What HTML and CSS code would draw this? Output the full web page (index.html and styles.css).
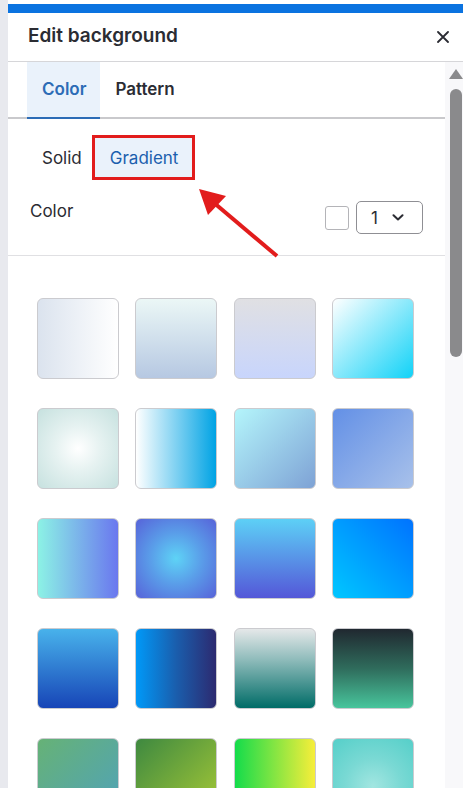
FILE: index.html
```html
<!DOCTYPE html>
<html lang="en">
<head>
<meta charset="utf-8">
<title>Edit background</title>
<link rel="stylesheet" href="styles.css">
</head>
<body>
<div class="app">
  <div class="side"></div>
  <div class="panel">
    <div class="topbar"></div>
    <div class="header">
      <h1 class="title">Edit background</h1>
      <button class="close" aria-label="Close">
        <svg width="12" height="12" viewBox="0 0 12 12"><path d="M1 1 L11 11 M11 1 L1 11" stroke="#2b2c33" stroke-width="1.8" stroke-linecap="round" fill="none"/></svg>
      </button>
    </div>
    <div class="body">
      <div class="content">
        <div class="tabs">
          <div class="tab active">Color</div>
          <div class="tab">Pattern</div>
        </div>
        <div class="modes">
          <button class="mode">Solid</button>
          <button class="mode selected">Gradient</button>
        </div>
        <div class="color-row">
          <span class="label">Color</span>
          <div class="controls">
            <span class="chip"></span>
            <div class="select">
              <span class="select-value">1</span>
              <svg width="12" height="7" viewBox="0 0 12 7"><path d="M1.5 1.2 L6 5.5 L10.5 1.2" stroke="#2b2c33" stroke-width="2" fill="none" stroke-linecap="round" stroke-linejoin="round"/></svg>
            </div>
          </div>
        </div>
        <div class="divider"></div>
        <div class="grid">
          <div class="sw g1"></div><div class="sw g2"></div><div class="sw g3"></div><div class="sw g4"></div>
          <div class="sw g5"></div><div class="sw g6"></div><div class="sw g7"></div><div class="sw g8"></div>
          <div class="sw g9"></div><div class="sw g10"></div><div class="sw g11"></div><div class="sw g12"></div>
          <div class="sw g13"></div><div class="sw g14"></div><div class="sw g15"></div><div class="sw g16"></div>
          <div class="sw g17"></div><div class="sw g18"></div><div class="sw g19"></div><div class="sw g20"></div>
        </div>
      </div>
      <div class="scrollbar">
        <div class="sb-arrow"></div>
        <div class="sb-thumb"></div>
      </div>
    </div>
  </div>
  <svg class="annot" width="463" height="788" viewBox="0 0 463 788">
    <line x1="277" y1="256" x2="213" y2="202" stroke="#e21c1c" stroke-width="4"/>
    <polygon points="199,189 208,215 226,196" fill="#e21c1c"/>
  </svg>
</div>
</body>
</html>
```

FILE: styles.css
```css
* { box-sizing: border-box; }
html, body { margin: 0; padding: 0; }
body {
  font-family: Inter, "Noto Sans", "Liberation Sans", sans-serif;
  background: #e8e9ee;
  width: 463px;
  height: 788px;
  overflow: hidden;
}
.app {
  position: relative;
  display: flex;
  width: 463px;
  height: 788px;
}
.side {
  width: 8px;
  flex: none;
  background: #e8e9ee;
}
.panel {
  flex: 1;
  display: flex;
  flex-direction: column;
  background: #fff;
  padding-top: 4px;
  overflow: hidden;
}
.topbar {
  height: 9px;
  background: #0b73e0;
  flex: none;
}
.header {
  height: 49px;
  flex: none;
  display: flex;
  align-items: center;
  justify-content: space-between;
  padding: 0 14px 3px 20px;
  border-bottom: 1px solid #d6d6d9;
}
.title {
  margin: 0;
  font-size: 19px;
  font-weight: 600;
  color: #2b2c33;
  letter-spacing: 0;
}
.close {
  border: 0;
  background: none;
  padding: 0;
  width: 12px;
  height: 12px;
  display: flex;
  margin-top: 3px;
}
.body {
  flex: 1;
  display: flex;
  min-height: 0;
}
.content {
  width: 437px;
  flex: none;
  overflow: hidden;
}
.tabs {
  display: flex;
  height: 57px;
  padding-left: 19px;
  border-bottom: 2px solid #c9c9cc;
}
.tab {
  display: flex;
  align-items: center;
  padding: 0 15px 2px;
  font-size: 17px;
  font-weight: 600;
  color: #2b2c33;
  margin-bottom: -2px;
  border-bottom: 2px solid transparent;
}
.tab.active {
  background: #eaf2fb;
  color: #2c6cb6;
  border-bottom-color: #2c6cb6;
  padding: 0 14px 2px 15px;
}
.modes {
  display: flex;
  margin-top: 19px;
  padding-left: 19px;
}
.mode {
  font-family: inherit;
  font-size: 17px;
  height: 39px;
  padding: 0 13px 0 15px;
  border: 0;
  background: none;
  color: #2b2c33;
}
.mode.selected {
  background: #eaf2fb;
  color: #1b5fae;
  outline: 3px solid #e21c1c;
  padding: 0 14px 0 15px;
}
.color-row {
  display: flex;
  justify-content: space-between;
  align-items: flex-start;
  margin-top: 24px;
  padding: 0 22px 0 22px;
}
.label {
  font-size: 17px;
  color: #2b2c33;
  line-height: 20px;
}
.controls {
  display: flex;
  align-items: center;
  gap: 7px;
}
.chip {
  width: 24px;
  height: 24px;
  border: 1px solid #b4b4b8;
  border-radius: 3px;
  background: #fff;
}
.select {
  width: 67px;
  height: 33px;
  border: 1px solid #8f8f94;
  border-radius: 5px;
  display: flex;
  align-items: center;
  padding-left: 14px;
  gap: 14px;
}
.select-value {
  font-size: 17px;
  color: #2b2c33;
}
.divider {
  margin-top: 21px;
  height: 1px;
  background: #e0e0e3;
}
.grid {
  margin-top: 42px;
  margin-left: 29px;
  width: 377px;
  display: grid;
  grid-template-columns: repeat(4, 82px);
  justify-content: space-between;
  grid-auto-rows: 81px;
  row-gap: 29px;
}
.sw {
  border: 1px solid #cbcbcf;
  border-radius: 6px;
}
.g1 { background: linear-gradient(to right, #dbe3ee, #ffffff); }
.g2 { background: linear-gradient(to bottom, #ebf7f6, #b6c8e2); }
.g3 { background: linear-gradient(to bottom, #e0e0e3, #c8d5fc); }
.g4 { background: linear-gradient(135deg, #ffffff, #11d2f7); }
.g5 { background: radial-gradient(circle at 50% 50%, #ffffff 0%, #e6f2f1 40%, #c6e1df 100%); }
.g6 { background: linear-gradient(to right, #ffffff, #00a3e4); }
.g7 { background: linear-gradient(135deg, #b4f5fb, #7ea2d5); }
.g8 { background: linear-gradient(135deg, #6390e6, #a8c1ea); }
.g9 { background: linear-gradient(to right, #8cf2e5, #6a77ef); }
.g10 { background: radial-gradient(circle at 50% 50%, #5ed3f6 0%, #5a9ee9 45%, #5763d9 100%); }
.g11 { background: linear-gradient(to bottom, #5dd0f6, #5457d8); }
.g12 { background: linear-gradient(45deg, #00c7ff, #0073ff); }
.g13 { background: linear-gradient(to bottom, #48b2eb, #1745b7); }
.g14 { background: linear-gradient(to right, #0099f8, #1a5ead 50%, #2c2a70); }
.g15 { background: linear-gradient(to bottom, #e5e8e9, #8cbab9 40%, #006c67); }
.g16 { background: linear-gradient(to bottom, #202830, #2f6c5c 50%, #48c59c); }
.g17 { background: linear-gradient(135deg, #66b276, #50a2ba); }
.g18 { background: linear-gradient(135deg, #3e8940, #a8ca36); }
.g19 { background: linear-gradient(to right, #14dc4b, #f7ee3a); }
.g20 { background: radial-gradient(circle at 50% 60%, #a2e6e1 0%, #7ad9d4 45%, #55cfc9 100%); }
.scrollbar {
  width: 18px;
  flex: none;
  background: #f8f8fa;
  display: flex;
  flex-direction: column;
  align-items: flex-end;
}
.sb-arrow {
  margin-top: 7px;
  width: 0;
  height: 0;
  border-left: 7px solid transparent;
  border-right: 7px solid transparent;
  border-bottom: 10px solid #8a8a8c;
}
.sb-thumb {
  margin-top: 10px;
  margin-right: 1px;
  width: 12px;
  height: 268px;
  border-radius: 6px;
  background: #8a8a8c;
}
.annot {
  position: absolute;
  left: 0;
  top: 0;
  pointer-events: none;
}
```
